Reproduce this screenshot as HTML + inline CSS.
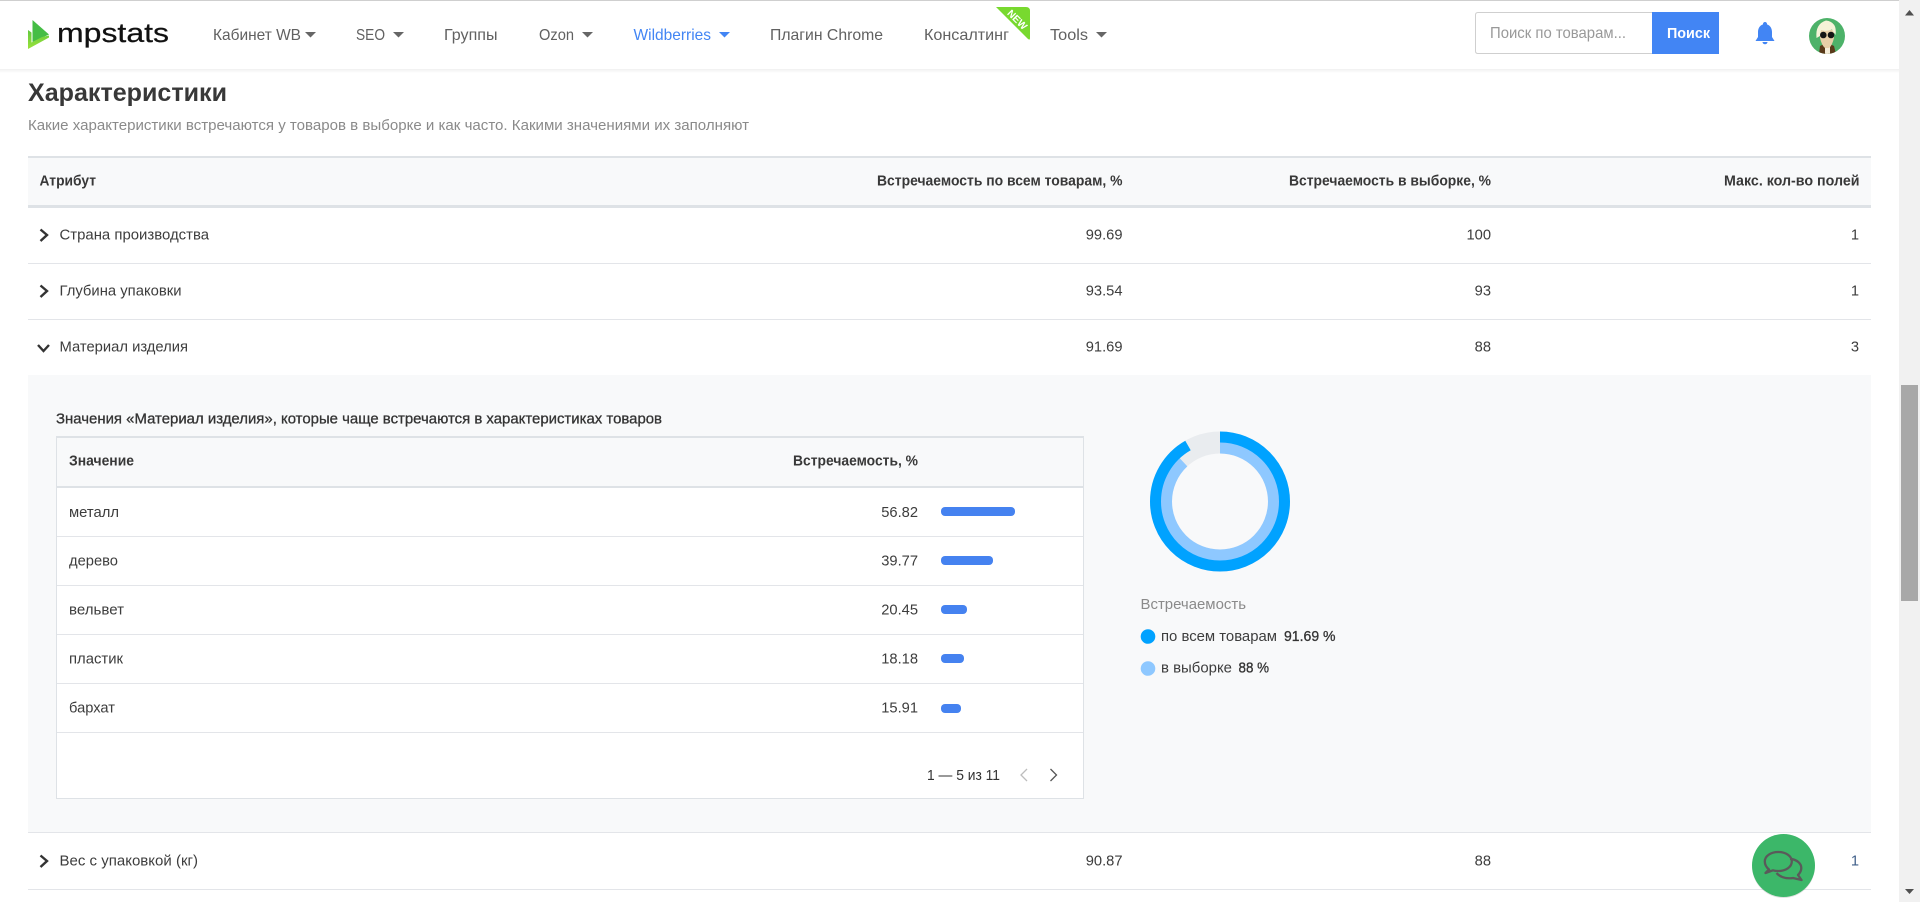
<!DOCTYPE html>
<html lang="ru">
<head>
<meta charset="utf-8">
<title>Характеристики — mpstats</title>
<style>
html,body{margin:0;padding:0;width:1920px;height:902px;overflow:hidden;background:#fff}
svg{display:block}
text{font-family:"Liberation Sans","Noto Sans CJK SC",sans-serif;font-size:15px;fill:#3d3d3d}
.nav{font-size:16px;fill:#616161}
.b{font-weight:700;fill:#383838}
.m{stroke:#333;stroke-width:.3px;fill:#333}
.grey{fill:#8a8a8a}
.line{fill:#e3e5e9}
.ch{fill:none;stroke:#333;stroke-width:2.4}
.num{font-size:14.700px}
</style>
</head>
<body>
<svg width="1920" height="902" viewBox="0 0 1920 902" xmlns="http://www.w3.org/2000/svg">
<defs>
<linearGradient id="sh" x1="0" y1="0" x2="0" y2="1"><stop offset="0" stop-color="#f0f0f0"/><stop offset="1" stop-color="#fff"/></linearGradient>
<linearGradient id="lg" x1="0" y1="0" x2="0" y2="1"><stop offset="0" stop-color="#62c93f"/><stop offset="1" stop-color="#9be23a"/></linearGradient>
<clipPath id="av"><circle cx="1827" cy="36" r="18"/></clipPath>
</defs>

<!-- header -->
<rect x="0" y="0" width="1920" height="1" fill="#cfcfcf"/>
<rect x="0" y="69" width="1899" height="4" fill="url(#sh)"/>

<path d="M32.500 20 L49 34.500 L32.500 42 Z" fill="#45bd45"/>
<path d="M28 30 L31.500 32.500 L31.500 42.500 L42 37 L49 35.500 L49 37.500 L28 49 Z" fill="url(#lg)"/>
<text x="57" y="42" textLength="112" lengthAdjust="spacingAndGlyphs" style="font-size:27px;fill:#111;stroke:#111;stroke-width:.25px">mpstats</text>

<text class="nav" x="213" y="40" textLength="88" lengthAdjust="spacingAndGlyphs">Кабинет WB</text>
<path d="M305 32 H316 L310.500 37.500 Z" fill="#666"/>
<text class="nav" x="356" y="40" textLength="29" lengthAdjust="spacingAndGlyphs">SEO</text>
<path d="M393 32 H404 L398.500 37.500 Z" fill="#666"/>
<text class="nav" x="444" y="40" textLength="53.500" lengthAdjust="spacingAndGlyphs">Группы</text>
<text class="nav" x="539" y="40" textLength="35" lengthAdjust="spacingAndGlyphs">Ozon</text>
<path d="M582 32 H593 L587.500 37.500 Z" fill="#666"/>
<text class="nav" x="633.500" y="40" textLength="77.500" lengthAdjust="spacingAndGlyphs" style="fill:#4285f4">Wildberries</text>
<path d="M719 32 H730 L724.500 37.500 Z" fill="#4285f4"/>
<text class="nav" x="770" y="40" textLength="113" lengthAdjust="spacingAndGlyphs">Плагин Chrome</text>
<text class="nav" x="924" y="40" textLength="85" lengthAdjust="spacingAndGlyphs">Консалтинг</text>
<path d="M996 7 H1026 Q1030 7 1030 11 V38 Q1030 40.500 1028 39 Z" fill="#78d92f"/>
<text x="1017" y="23" text-anchor="middle" transform="rotate(45 1017 20)" style="font-size:10px;font-weight:700;fill:#fff">NEW</text>
<text class="nav" x="1050" y="40" textLength="38" lengthAdjust="spacingAndGlyphs">Tools</text>
<path d="M1096 32 H1107 L1101.500 37.500 Z" fill="#666"/>

<path d="M1652 12.500 H1478 Q1475.500 12.500 1475.500 15 V51 Q1475.500 53.500 1478 53.500 H1652" fill="#fff" stroke="#cfcfcf"/>
<text x="1490" y="38" textLength="136" lengthAdjust="spacingAndGlyphs" style="font-size:16px;fill:#999">Поиск по товарам...</text>
<rect x="1652" y="12" width="67" height="42" fill="#4285f4"/>
<text x="1667" y="38" textLength="43" lengthAdjust="spacingAndGlyphs" style="font-weight:700;font-size:15px;fill:#fff">Поиск</text>

<path d="M1765 22 a2 2 0 0 1 2 2.400 C1770.300 25.500 1772 28.500 1772 32 V37 L1774.500 41 H1755.500 L1758 37 V32 C1758 28.500 1759.700 25.500 1763 24.400 A2 2 0 0 1 1765 22 Z M1762.500 42 H1767.500 A2.500 2.300 0 0 1 1762.500 42 Z" fill="#4285f4"/>

<circle cx="1827" cy="36" r="18" fill="#4db269"/>
<g clip-path="url(#av)">
<path d="M1819 54 L1820 46 L1824 44 H1830 L1834 46 L1836 54 Z" fill="#5a3a1a"/>
<path d="M1825 54 V46 H1830 V54 Z" fill="#f5ecd8"/>
<path d="M1820 30 H1834 V38 Q1832 46 1829 48 H1825 Q1822 46 1820 38 Z" fill="#e8cfa8"/>
<path d="M1816.500 38 Q1815 24 1826 20.500 Q1837.500 22 1835.500 35 L1832 29.500 Q1826 32 1821 30 L1820 36 Z" fill="#f5f3d8"/>
<circle cx="1823.300" cy="35" r="3.300" fill="#151515"/>
<circle cx="1831" cy="35" r="3.300" fill="#151515"/>
</g>

<!-- section -->
<text class="b" x="28" y="101" textLength="199" lengthAdjust="spacingAndGlyphs" style="font-size:25px">Характеристики</text>
<text class="grey" x="28" y="130" textLength="721" lengthAdjust="spacingAndGlyphs">Какие характеристики встречаются у товаров в выборке и как часто. Какими значениями их заполняют</text>

<!-- main table head -->
<rect x="28" y="156" width="1843" height="52" fill="#f8f9fa"/>
<rect x="28" y="156" width="1843" height="2" fill="#dee2e6"/>
<rect x="28" y="205" width="1843" height="3" fill="#dee2e6"/>
<text class="b" x="39.500" y="185.500" textLength="56.500" lengthAdjust="spacingAndGlyphs">Атрибут</text>
<text class="b" x="877" y="185.500" textLength="245.500" lengthAdjust="spacingAndGlyphs">Встречаемость по всем товарам, %</text>
<text class="b" x="1289" y="185.500" textLength="202" lengthAdjust="spacingAndGlyphs">Встречаемость в выборке, %</text>
<text class="b" x="1724" y="185.500" textLength="135.500" lengthAdjust="spacingAndGlyphs">Макс. кол-во полей</text>

<!-- row 1 -->
<path class="ch" d="M40.500 229.500 L47 235 L40.500 241"/>
<text x="59.500" y="239.500" textLength="149.500" lengthAdjust="spacingAndGlyphs">Страна производства</text>
<text class="num" x="1122.500" y="239.500" text-anchor="end">99.69</text>
<text class="num" x="1491" y="239.500" text-anchor="end">100</text>
<text class="num" x="1859" y="239.500" text-anchor="end">1</text>
<rect class="line" x="28" y="263" width="1843" height="1"/>

<!-- row 2 -->
<path class="ch" d="M40.500 285.500 L47 291 L40.500 297"/>
<text x="59.500" y="295.500" textLength="122" lengthAdjust="spacingAndGlyphs">Глубина упаковки</text>
<text class="num" x="1122.500" y="295.500" text-anchor="end">93.54</text>
<text class="num" x="1491" y="295.500" text-anchor="end">93</text>
<text class="num" x="1859" y="295.500" text-anchor="end">1</text>
<rect class="line" x="28" y="319" width="1843" height="1"/>

<!-- row 3 -->
<path class="ch" d="M38 345 L43.500 351 L49 345"/>
<text x="59.500" y="351.500" textLength="128.500" lengthAdjust="spacingAndGlyphs">Материал изделия</text>
<text class="num" x="1122.500" y="351.500" text-anchor="end">91.69</text>
<text class="num" x="1491" y="351.500" text-anchor="end">88</text>
<text class="num" x="1859" y="351.500" text-anchor="end">3</text>

<!-- expanded panel -->
<rect x="28" y="375" width="1843" height="457" fill="#f8f9fa"/>
<text class="m" x="56" y="423.500" textLength="606" lengthAdjust="spacingAndGlyphs">Значения «Материал изделия», которые чаще встречаются в характеристиках товаров</text>

<rect x="56.500" y="436.500" width="1027" height="362" fill="#fff" stroke="#dee2e6"/>
<rect x="57" y="437" width="1026" height="50" fill="#f8f9fa"/>
<rect x="56" y="436" width="1028" height="2" fill="#dee2e6"/>
<rect x="57" y="486" width="1026" height="2" fill="#dee2e6"/>
<text class="b" x="69" y="465.500" textLength="65" lengthAdjust="spacingAndGlyphs">Значение</text>
<text class="b" x="793" y="465.500" textLength="125" lengthAdjust="spacingAndGlyphs">Встречаемость, %</text>

<text x="69" y="517" textLength="50" lengthAdjust="spacingAndGlyphs">металл</text>
<text class="num" x="918" y="517" text-anchor="end">56.82</text>
<rect x="941" y="507" width="74" height="9" rx="4" fill="#4582f0"/>
<rect class="line" x="57" y="536" width="1026" height="1"/>

<text x="69" y="565.500" textLength="49" lengthAdjust="spacingAndGlyphs">дерево</text>
<text class="num" x="918" y="565.500" text-anchor="end">39.77</text>
<rect x="941" y="556" width="52" height="9" rx="4" fill="#4582f0"/>
<rect class="line" x="57" y="585" width="1026" height="1"/>

<text x="69" y="614.500" textLength="55" lengthAdjust="spacingAndGlyphs">вельвет</text>
<text class="num" x="918" y="614.500" text-anchor="end">20.45</text>
<rect x="941" y="605" width="26" height="9" rx="4" fill="#4582f0"/>
<rect class="line" x="57" y="634" width="1026" height="1"/>

<text x="69" y="663.500" textLength="54" lengthAdjust="spacingAndGlyphs">пластик</text>
<text class="num" x="918" y="663.500" text-anchor="end">18.18</text>
<rect x="941" y="654" width="23" height="9" rx="4" fill="#4582f0"/>
<rect class="line" x="57" y="683" width="1026" height="1"/>

<text x="69" y="712.500" textLength="46" lengthAdjust="spacingAndGlyphs">бархат</text>
<text class="num" x="918" y="712.500" text-anchor="end">15.91</text>
<rect x="941" y="704" width="20" height="9" rx="4" fill="#4582f0"/>
<rect class="line" x="57" y="732" width="1026" height="1"/>

<text x="927" y="780" textLength="73" lengthAdjust="spacingAndGlyphs" style="fill:#333">1 — 5 из 11</text>
<path d="M1027 769 L1021 775 L1027 781" fill="none" stroke="#bdbdbd" stroke-width="1.300"/>
<path d="M1050.500 769 L1056.500 775 L1050.500 781" fill="none" stroke="#555" stroke-width="1.300"/>

<!-- donut -->
<circle cx="1220" cy="501.500" r="59" fill="none" stroke="#e9ecef" stroke-width="22"/>
<circle cx="1220" cy="501.500" r="53.700" fill="none" stroke="#8ec8ff" stroke-width="11.400" stroke-dasharray="296.900 337.400" transform="rotate(-90 1220 501.500)"/>
<circle cx="1220" cy="501.500" r="64.500" fill="none" stroke="#00a2ff" stroke-width="11" stroke-dasharray="371.600 405.300" transform="rotate(-90 1220 501.500)"/>

<text class="grey" x="1140.500" y="609" textLength="105.500" lengthAdjust="spacingAndGlyphs">Встречаемость</text>
<circle cx="1148" cy="636.500" r="7.300" fill="#00a2ff"/>
<text x="1161" y="641" textLength="116" lengthAdjust="spacingAndGlyphs">по всем товарам</text>
<text class="m" x="1284" y="641" textLength="51.500" lengthAdjust="spacingAndGlyphs">91.69 %</text>
<circle cx="1148" cy="668.500" r="7.300" fill="#8ec8ff"/>
<text x="1161" y="672.500" textLength="71" lengthAdjust="spacingAndGlyphs">в выборке</text>
<text class="m" x="1238.500" y="672.500" textLength="30.500" lengthAdjust="spacingAndGlyphs">88 %</text>

<!-- row 4 -->
<rect class="line" x="28" y="832" width="1843" height="1"/>
<path class="ch" d="M40.500 855.500 L47 861 L40.500 867"/>
<text x="59.500" y="865.500" textLength="138.500" lengthAdjust="spacingAndGlyphs">Вес с упаковкой (кг)</text>
<text class="num" x="1122.500" y="865.500" text-anchor="end">90.87</text>
<text class="num" x="1491" y="865.500" text-anchor="end">88</text>
<text class="num" x="1859" y="865.500" text-anchor="end" style="fill:#3f5f8a">1</text>
<rect class="line" x="28" y="889" width="1843" height="1"/>

<!-- chat button -->
<circle cx="1783.500" cy="866.500" r="31.500" fill="#000" opacity=".12"/>
<circle cx="1783.500" cy="865.500" r="31.500" fill="#3cb769"/>
<path d="M1769 869.500 C1766 867 1764.800 864.500 1764.800 861.500 C1764.800 856 1770.800 852 1778.300 852 C1785.800 852 1791.800 856 1791.800 861.500 C1791.800 867 1785.800 871 1778.300 871 C1776.300 871 1774.500 870.800 1773 870.300 L1765.500 873 Z" fill="none" stroke="#5a5a5a" stroke-width="2.300" stroke-linejoin="round"/>
<path d="M1790 858.800 C1797 859.500 1801.300 863.500 1801.300 868 C1801.300 871 1800 873 1798 875 L1801.500 880 L1793 878 C1786 879 1780 877 1776.500 873" fill="none" stroke="#5a5a5a" stroke-width="2.300" stroke-linejoin="round"/>

<!-- scrollbar -->
<rect x="1899" y="0" width="21" height="902" fill="#f1f1f1"/>
<rect x="1901" y="385" width="17" height="216" fill="#a8a8a8"/>
<path d="M1905 15.500 H1914 L1909.500 10 Z" fill="#505050"/>
<path d="M1905 889 H1914 L1909.500 894 Z" fill="#505050"/>
</svg>
</body>
</html>
